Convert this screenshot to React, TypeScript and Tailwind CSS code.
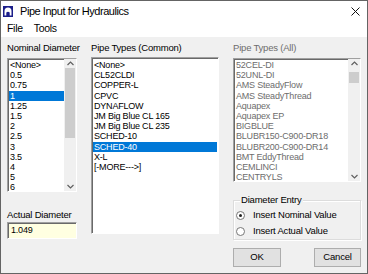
import React from 'react';

const nominal = ['<None>', '0.5', '0.75', '1', '1.25', '1.5', '2', '2.5', '3', '3.5', '4', '5', '6'];
const common = ['<None>', 'CL52CLDI', 'COPPER-L', 'CPVC', 'DYNAFLOW', 'JM Big Blue CL 165', 'JM Big Blue CL 235', 'SCHED-10', 'SCHED-40', 'X-L', '[-MORE--->]'];
const all = ['52CEL-DI', '52UNL-DI', 'AMS SteadyFlow', 'AMS SteadyThread', 'Aquapex', 'Aquapex EP', 'BIGBLUE', 'BLUBR150-C900-DR18', 'BLUBR200-C900-DR14', 'BMT EddyThread', 'CEMLINCI', 'CENTRYLS'];

const Chevron = ({ down = false }: { down?: boolean }) => (
  <svg width="7" height="5" viewBox="0 0 7 5">
    <polyline
      points={down ? '0.5,1 3.5,4 6.5,1' : '0.5,4 3.5,1 6.5,4'}
      fill="none"
      stroke="#606060"
      strokeWidth="1.2"
    />
  </svg>
);

const ScrollBar = ({ thumbTop, thumbH }: { thumbTop: number; thumbH: number }) => (
  <div className="w-[12px] h-full bg-[#f0f0f0] flex flex-col items-center shrink-0">
    <div className="h-[9px] flex items-center justify-center">
      <Chevron />
    </div>
    <div className="flex-1 w-full relative">
      <div className="absolute left-[1px] right-[1px] bg-[#cdcdcd]" style={{ top: thumbTop, height: thumbH }} />
    </div>
    <div className="h-[10px] flex items-center justify-center">
      <Chevron down />
    </div>
  </div>
);

const sunken = 'border border-t-[#a0a0a0] border-l-[#a0a0a0] border-r-[#ffffff] border-b-[#ffffff] shadow-[inset_1px_1px_0_#696969]';

const Radio = ({ checked }: { checked?: boolean }) => (
  <span className="w-[9px] h-[9px] rounded-full border border-[#777] bg-white flex items-center justify-center shrink-0">
    {checked && <span className="w-[3px] h-[3px] rounded-full bg-[#222]" />}
  </span>
);

export default function App() {
  return (
    <div className="w-[368px] h-[274px] border border-[#646464] flex flex-col bg-white text-black font-['Liberation_Sans',Arial,sans-serif] text-[9px] tracking-[-0.2px] whitespace-nowrap overflow-hidden">
      {/* title bar */}
      <div className="h-[20px] flex items-center pl-[2px] pr-[6px] shrink-0">
        <svg width="10" height="11" viewBox="0 0 10 11" className="mt-[1px]">
          <rect width="10" height="11" fill="#1c1f8a" />
          <path d="M1.5 9.5 L1.5 5 Q1.5 1.5 5 1.5 Q8.5 1.5 8.5 5 L8.5 9.5 L6.7 9.5 L6.7 6.5 Q5 5 3.3 6.5 L3.3 9.5 Z" fill="#fff" />
        </svg>
        <span className="ml-[7px] text-[11px] tracking-[-0.45px]">Pipe Input for Hydraulics</span>
        <svg width="9" height="9" viewBox="0 0 9 9" className="ml-auto mr-[1px] mt-[1px]">
          <path d="M0.5 0.5 L8.5 8.5 M8.5 0.5 L0.5 8.5" stroke="#111" strokeWidth="1" />
        </svg>
      </div>
      {/* menu bar */}
      <div className="h-[16px] flex items-center gap-[11px] pl-[6px] text-[10.5px] tracking-[-0.3px] shrink-0">
        <span>File</span>
        <span>Tools</span>
      </div>
      {/* body */}
      <div className="flex-1 bg-[#f0f0f0] flex pl-[6px] pt-[5px] gap-[14px]">
        {/* column 1 */}
        <div className="w-[70px] flex flex-col">
          <div className="h-[12px] leading-[12px] text-[9.5px]">Nominal Diameter</div>
          <div className={`mt-[4px] h-[134px] bg-white flex ${sunken}`}>
            <div className="flex-1 pt-[1px] pl-[1px] overflow-hidden">
              {nominal.map((n, i) => (
                <div key={n} className={`h-[10.2px] leading-[10.2px] pl-[1px] ${i === 3 ? 'bg-[#0078d7] text-white' : ''}`}>{n}</div>
              ))}
            </div>
            <ScrollBar thumbTop={0} thumbH={70} />
          </div>
          <div className="mt-[17px] h-[12px] leading-[12px] text-[9.5px]">Actual Diameter</div>
          <div className={`mt-[1px] h-[17px] bg-[#ffffe1] pl-[3px] leading-[15px] ${sunken}`}>1.049</div>
        </div>
        {/* column 2 */}
        <div className="w-[128px] flex flex-col">
          <div className="h-[12px] leading-[12px] text-[9.5px]">Pipe Types (Common)</div>
          <div className={`mt-[3px] h-[177px] bg-white pt-[2px] pl-[1px] pr-[1px] ${sunken}`}>
            {common.map((c, i) => (
              <div key={c} className={`h-[10.2px] leading-[10.2px] pl-[1px] ${i === 8 ? 'bg-[#0078d7] text-white' : ''}`}>{c}</div>
            ))}
          </div>
        </div>
        {/* column 3 */}
        <div className="w-[128px] flex flex-col">
          <div className="h-[12px] leading-[12px] text-[9.5px] text-[#6d6d6d]">Pipe Types (All)</div>
          <div className={`mt-[4px] h-[124px] bg-white flex text-[#6d6d6d] ${sunken}`}>
            <div className="flex-1 pt-[1px] pl-[1px] overflow-hidden">
              {all.map(a => (
                <div key={a} className="h-[10.2px] leading-[10.2px] pl-[1px]">{a}</div>
              ))}
            </div>
            <ScrollBar thumbTop={4} thumbH={11} />
          </div>
          <div className="relative mt-[18px] h-[40px] border border-[#dcdcdc] shadow-[inset_1px_1px_0_#fff,1px_1px_0_#fff] pt-[8px] pl-[2px] flex flex-col gap-[4px]">
            <span className="absolute -top-[7px] left-[6px] px-[1px] bg-[#f0f0f0] leading-[12px] text-[9.5px]">Diameter Entry</span>
            <div className="flex items-center gap-[8px] h-[12px] text-[9.5px]">
              <Radio checked />
              <span>Insert Nominal Value</span>
            </div>
            <div className="flex items-center gap-[8px] h-[12px] text-[9.5px]">
              <Radio />
              <span>Insert Actual Value</span>
            </div>
          </div>
          <div className="mt-[8px] flex justify-between">
            <button className="w-[48px] h-[19px] border border-[#adadad] bg-[#e1e1e1] text-[9.5px]">OK</button>
            <button className="w-[47px] h-[19px] border border-[#adadad] bg-[#e1e1e1] text-[9.5px]">Cancel</button>
          </div>
        </div>
      </div>
    </div>
  );
}
